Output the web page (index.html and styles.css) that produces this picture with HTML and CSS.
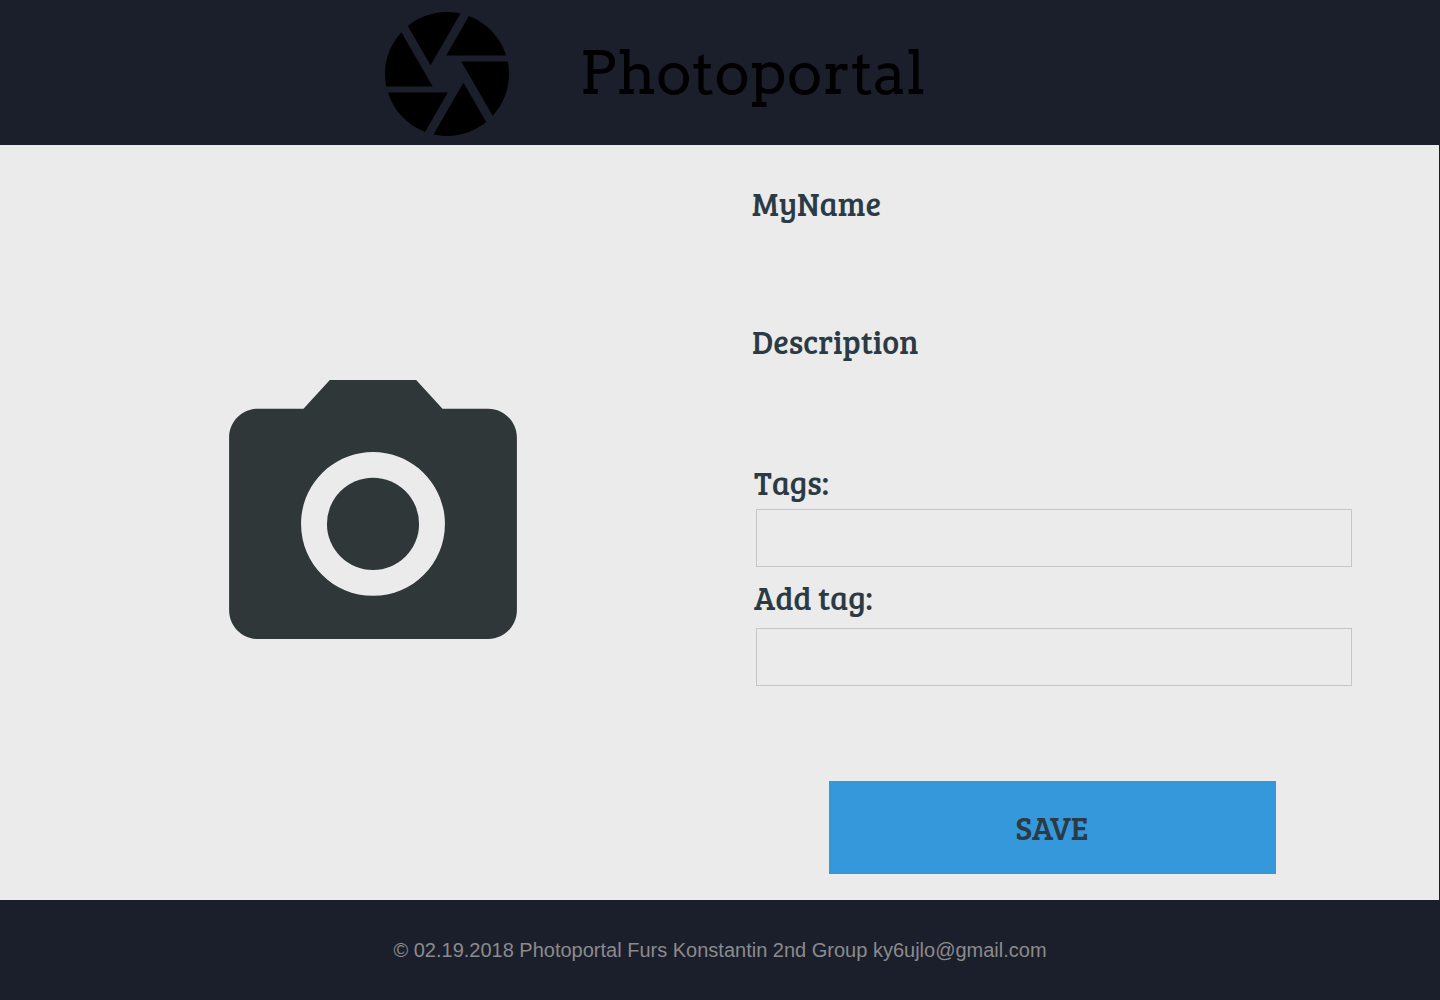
FILE: index.html
```html
<!DOCTYPE html>
<html lang="en">
<head>
<meta charset="utf-8">
<title>Photoportal</title>
<meta name="viewport" content="width=device-width, initial-scale=1">
<link rel="stylesheet" href="styles.css">
</head>
<body>
<header class="header">
  <svg class="logo" viewBox="2 2 20 20" aria-hidden="true"><path d="M9.4 10.5l4.77-8.26C13.47 2.09 12.75 2 12 2c-2.4 0-4.6.85-6.32 2.25l3.66 6.35.06-.1zM21.54 9c-.92-2.92-3.15-5.26-6-6.34L11.88 9h9.66zm.26 1h-7.49l.29.5 4.76 8.25C21 16.97 22 14.61 22 12c0-.69-.07-1.35-.2-2zM8.54 12l-3.9-6.75C3.01 7.03 2 9.39 2 12c0 .69.07 1.35.2 2h7.49l-1.15-2zm-6.08 3c.92 2.92 3.15 5.26 6 6.34L12.12 15H2.46zm11.27 0l-3.9 6.76c.7.15 1.42.24 2.17.24 2.4 0 4.6-.85 6.32-2.25l-3.66-6.35-.93 1.6z"/></svg>
  <h1 class="brand">Photoportal</h1>
</header>
<main class="main">
  <div class="photo">
    <svg class="camera" viewBox="2 2 20 18" aria-hidden="true"><circle cx="12" cy="12" r="3.2"/><path d="M9 2L7.17 4H4c-1.1 0-2 .9-2 2v12c0 1.1.9 2 2 2h16c1.1 0 2-.9 2-2V6c0-1.1-.9-2-2-2h-3.17L15 2H9zm3 15c-2.76 0-5-2.24-5-5s2.24-5 5-5 5 2.24 5 5-2.24 5-5 5z"/></svg>
  </div>
  <form class="details">
    <h2 class="title name">MyName</h2>
    <h2 class="title description">Description</h2>
    <label class="title label" for="tags">Tags:</label>
    <input class="field tags" id="tags" type="text">
    <label class="title label" for="add-tag">Add tag:</label>
    <input class="field add-tag" id="add-tag" type="text">
    <button class="save" type="button">SAVE</button>
  </form>
</main>
<footer class="footer">© 02.19.2018 Photoportal Furs Konstantin 2nd Group ky6ujlo@gmail.com</footer>
</body>
</html>
```
FILE: styles.css
```css
* {
  box-sizing: border-box;
}

body {
  display: flex;
  flex-direction: column;
  min-height: 100vh;
  margin: 0;
  background: #1b1f2b;
  color: #2b3b45;
  font-family: "Bree Serif", "DejaVu Serif Condensed", "DejaVu Serif", serif;
}

.header {
  display: flex;
  align-items: center;
  gap: 70px;
  padding: 12px 0 9px 26.75%;
  color: #000;
}

.logo {
  width: 124px;
  height: 124px;
}

.brand {
  margin: 0;
  padding-bottom: 2px;
  font-family: "Arvo", "DejaVu Serif", serif;
  font-size: 60px;
  line-height: 72px;
  font-weight: 400;
}

.main {
  display: grid;
  grid-template-columns: 745fr 694fr;
  flex: 1;
  margin-right: 1px;
  background: #ebebeb;
}

.photo {
  display: flex;
  align-items: center;
  justify-content: center;
  padding-bottom: 27px;
}

.camera {
  width: 288px;
  height: 259px;
  fill: #2f3739;
}

.details {
  display: flex;
  flex-direction: column;
  padding: 39px 87px 26px 7px;
}

.title {
  margin: 0;
  font-size: 32px;
  line-height: 40px;
  font-weight: 400;
}

.name {
  margin-bottom: 98px;
}

.description {
  margin-bottom: 101px;
}

.label {
  padding-left: 2px;
}

.field {
  height: 58px;
  margin: 6px 0 11px 4px;
  padding: 0 12px;
  border: 1px solid #c5c5c5;
  background: transparent;
  color: inherit;
  font: inherit;
  font-size: 32px;
}

.add-tag {
  margin-top: 10px;
}

.save {
  width: 447px;
  max-width: 100%;
  height: 93px;
  margin-top: auto;
  align-self: center;
  padding: 0;
  border: 0;
  background: #3598db;
  color: #2b3b45;
  font: inherit;
  font-size: 32px;
}

.footer {
  padding: 38px 0;
  color: #8b8b8b;
  font-family: "Liberation Sans", Arial, sans-serif;
  font-size: 20px;
  line-height: 24px;
  text-align: center;
}
```
